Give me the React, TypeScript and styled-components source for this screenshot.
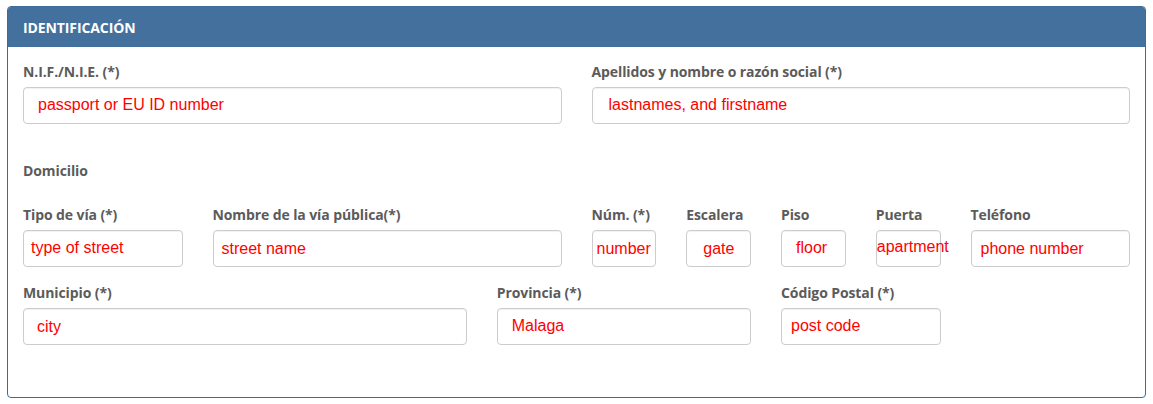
import React from "react";
import styled, { createGlobalStyle } from "styled-components";

const GlobalStyle = createGlobalStyle`
  html, body {
    margin: 0;
    padding: 0;
    background: #ffffff;
  }
  body {
    font-family: "Open Sans", "Liberation Sans", Arial, sans-serif;
  }
`;

const Page = styled.div`
  padding: 6px 7px;
`;

const Panel = styled.section`
  border: 1px solid #3f6b9c;
  border-radius: 4px;
  background: #fff;
  overflow: hidden;
`;

const PanelHeading = styled.header`
  height: 40px;
  display: flex;
  align-items: center;
  padding: 0 15px;
  background: #44709d;
  color: #fff;
  font-size: 14px;
  font-weight: 700;
  letter-spacing: -0.1px;
`;

const PanelBody = styled.div`
  padding: 15px 15px 52px;
`;

const Grid = styled.div`
  display: grid;
  grid-template-columns: repeat(12, 1fr);
  column-gap: 30px;
  row-gap: 16px;
`;

const Group = styled.div<{ $span: number }>`
  grid-column: span ${(p) => p.$span};
  min-width: 0;
`;

const Label = styled.label`
  display: block;
  font-size: 14px;
  line-height: 20px;
  font-weight: 700;
  letter-spacing: -0.1px;
  color: #5b5b5b;
  margin-bottom: 5px;
  white-space: nowrap;
`;

const SubHeading = styled.div`
  font-size: 14px;
  line-height: 20px;
  font-weight: 700;
  letter-spacing: -0.1px;
  color: #5b5b5b;
  margin: 37px 0 24px;
`;

const Field = styled.div<{ $pad: number; $lift?: number }>`
  height: 37px;
  box-sizing: border-box;
  border: 1px solid #cccccc;
  border-radius: 4px;
  box-shadow: inset 0 1px 1px rgba(0, 0, 0, 0.06);
  display: flex;
  align-items: center;
  padding-left: ${(p) => p.$pad}px;
  padding-bottom: ${(p) => (p.$lift ?? 0) * 2}px;
  font-family: "Liberation Sans", Arial, sans-serif;
  font-size: 16px;
  color: #ff0000;
  white-space: nowrap;
  overflow: visible;
`;

type F = { label: string; value: string; span: number; pad: number; lift?: number };

const top: F[] = [
  { label: "N.I.F./N.I.E. (*)", value: "passport or EU ID number", span: 6, pad: 14, lift: 1 },
  { label: "Apellidos y nombre o razón social (*)", value: "lastnames, and firstname", span: 6, pad: 16, lift: 1 },
];

const address: F[] = [
  { label: "Tipo de vía (*)", value: "type of street", span: 2, pad: 7, lift: 1 },
  { label: "Nombre de la vía pública(*)", value: "street name", span: 4, pad: 8 },
  { label: "Núm. (*)", value: "number", span: 1, pad: 4 },
  { label: "Escalera", value: "gate", span: 1, pad: 16 },
  { label: "Piso", value: "floor", span: 1, pad: 14, lift: 1 },
  { label: "Puerta", value: "apartment", span: 1, pad: 0, lift: 2 },
  { label: "Teléfono", value: "phone number", span: 2, pad: 9 },
  { label: "Municipio (*)", value: "city", span: 5, pad: 13 },
  { label: "Provincia (*)", value: "Malaga", span: 3, pad: 14, lift: 1 },
  { label: "Código Postal (*)", value: "post code", span: 2, pad: 9, lift: 1 },
];

const renderField = (f: F) => (
  <Group key={f.label} $span={f.span}>
    <Label>{f.label}</Label>
    <Field $pad={f.pad} $lift={f.lift}>{f.value}</Field>
  </Group>
);

export default function App() {
  return (
    <>
      <GlobalStyle />
      <Page>
        <Panel>
          <PanelHeading>IDENTIFICACIÓN</PanelHeading>
          <PanelBody>
            <Grid>{top.map(renderField)}</Grid>
            <SubHeading>Domicilio</SubHeading>
            <Grid>{address.map(renderField)}</Grid>
          </PanelBody>
        </Panel>
      </Page>
    </>
  );
}
